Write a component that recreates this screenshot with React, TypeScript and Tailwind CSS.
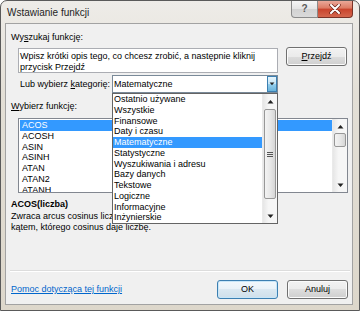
import React from 'react';

const categories = [
  'Ostatnio używane',
  'Wszystkie',
  'Finansowe',
  'Daty i czasu',
  'Matematyczne',
  'Statystyczne',
  'Wyszukiwania i adresu',
  'Bazy danych',
  'Tekstowe',
  'Logiczne',
  'Informacyjne',
  'Inżynierskie',
];

const functions = ['ACOS', 'ACOSH', 'ASIN', 'ASINH', 'ATAN', 'ATAN2', 'ATANH'];

// small black triangle used on scroll arrows / combo
const Arrow: React.FC<{ up?: boolean; size?: number }> = ({ up, size = 5 }) => (
  <svg width={size + 2} height={size} viewBox="0 0 7 5">
    {up ? <path d="M0.5 4.5 L3.5 1 L6.5 4.5 Z" fill="#222" /> : <path d="M0.5 0.5 L3.5 4 L6.5 0.5 Z" fill="#222" />}
  </svg>
);

const ScrollBar: React.FC<{ thumbTop: number; thumbHeight: number; grip?: boolean }> = ({ thumbTop, thumbHeight, grip }) => (
  <div className="w-[15px] h-full flex flex-col bg-[linear-gradient(to_right,#e6e6e6,#f6f6f6_40%,#f6f6f6)] border-l border-[#eaeaea]">
    <div className="h-[14px] flex items-center justify-center">
      <Arrow up />
    </div>
    <div className="flex-1 flex flex-col">
      <div style={{ height: thumbTop }} />
      <div
        className="mx-[1px] rounded-[2px] border border-[#979797] bg-[linear-gradient(to_right,#f3f3f3,#e8e8e8_50%,#d6d6d6)] flex items-center justify-center"
        style={{ height: thumbHeight }}
      >
        {grip && (
          <div className="flex flex-col gap-[1px]">
            <div className="w-[6px] h-[1px] bg-[#555]" />
            <div className="w-[6px] h-[1px] bg-[#555]" />
            <div className="w-[6px] h-[1px] bg-[#555]" />
          </div>
        )}
      </div>
    </div>
    <div className="h-[14px] flex items-center justify-center">
      <Arrow />
    </div>
  </div>
);

const PushButton: React.FC<{ children: React.ReactNode; primary?: boolean; className?: string }> = ({ children, primary, className }) => (
  <div
    className={
      'w-[61px] h-[19px] rounded-[3px] flex items-center justify-center leading-none ' +
      (primary
        ? 'border border-[#3c7fb1] shadow-[inset_0_0_0_1px_#c8e6f8] bg-[linear-gradient(to_bottom,#f2f8fc,#e9f2f8_50%,#dbe8f1_50%,#cfdfea)] '
        : 'border border-[#707070] shadow-[inset_0_0_0_1px_#fbfbfb] bg-[linear-gradient(to_bottom,#f2f2f2,#ebebeb_50%,#dddddd_50%,#cfcfcf)] ') +
      (className || '')
    }
  >
    {children}
  </div>
);

export default function App() {
  return (
    <div className="w-[360px] h-[311px] bg-white font-['Liberation_Sans','Noto_Sans',sans-serif] text-[9px] text-black">
      <div className="w-full h-full flex flex-col rounded-t-[7px] border border-[#5a5a5a] bg-[linear-gradient(to_bottom,#eeece8,#e3dfd6_30%,#ddd7cb)]">
        {/* Title bar */}
        <div className="h-[22px] flex items-start shrink-0">
          <div className="pl-[6px] pt-[5px] text-[10px] leading-[14px] text-[#1e1e1e]">Wstawianie funkcji</div>
          <div className="ml-auto mr-[6px] flex">
            <div className="w-[27px] h-[17px] rounded-bl-[4px] border border-t-0 border-[#8a8a8a] bg-[linear-gradient(to_bottom,#f6f6f6,#e4e4e4_50%,#d2d2d2_50%,#dadada)] flex items-center justify-center text-[10px] font-bold text-[#5a5a5a] leading-none">
              ?
            </div>
            <div className="w-[35px] h-[17px] rounded-br-[4px] border border-t-0 border-l-0 border-[#7a3328] bg-[linear-gradient(to_bottom,#eaa899,#dc7a63_45%,#c9432c_50%,#d4664d)] flex items-center justify-center">
              <svg width="12" height="10" viewBox="0 0 12 10">
                <path d="M2 1 L10 9 M10 1 L2 9" stroke="#6b2418" strokeWidth="3.4" strokeLinecap="round" />
                <path d="M2 1 L10 9 M10 1 L2 9" stroke="#ffffff" strokeWidth="2" strokeLinecap="round" />
              </svg>
            </div>
          </div>
        </div>

        {/* Client area */}
        <div className="ml-[4px] mr-[6px] mb-[5px] flex-1 border border-[#a2a2a2] bg-[#f0f0f0] flex flex-col">
          <div className="mt-[8px] ml-[5px] h-[11px] leading-[11px]">
            Wy<span className="underline">s</span>zukaj funkcję:
          </div>

          <div className="mt-[5px] flex items-start">
            <div className="ml-[12px] w-[260px] h-[25px] border border-[#abadb3] bg-white pl-[1px] pt-[2px] leading-[11px] whitespace-nowrap">
              Wpisz krótki opis tego, co chcesz zrobić, a następnie kliknij
              <br />
              przycisk Przejdź
            </div>
            <PushButton className="ml-[8px] -mt-[1px]">
              <span>
                <span className="underline">P</span>rzejdź
              </span>
            </PushButton>
          </div>

          <div className="mt-[2px] flex items-center">
            <div className="ml-[14px] w-[92px] leading-[11px]">
              Lub wybierz <span className="underline">k</span>ategorię:
            </div>
            <div className="relative w-[166px] h-[18px] border border-[#7a8a99] bg-white flex items-center">
              <div className="pl-[1px] flex-1 leading-[11px]">Matematyczne</div>
              <div className="w-[10px] h-full border border-[#3c7fb1] bg-[linear-gradient(to_bottom,#e5f4fc,#c4e5f6_50%,#98d1ef_50%,#68b3db)] flex items-center justify-center">
                <Arrow size={4} />
              </div>

              {/* open drop-down list */}
              <div className="absolute left-[-1px] top-[17px] w-[166px] h-[131px] border border-[#646464] bg-white flex z-10">
                <div className="flex-1 flex flex-col">
                  {categories.map((c) => (
                    <div
                      key={c}
                      className={
                        'h-[10.75px] leading-[10.75px] pl-[1px] whitespace-nowrap ' +
                        (c === 'Matematyczne' ? 'bg-[#3399ff] text-white' : '')
                      }
                    >
                      {c}
                    </div>
                  ))}
                </div>
                <ScrollBar thumbTop={1} thumbHeight={90} grip />
              </div>
            </div>
          </div>

          <div className="mt-[8px] ml-[5px] h-[11px] leading-[11px]">
            <span className="underline">W</span>ybierz funkcję:
          </div>

          <div className="mt-[6px] ml-[12px] w-[330px] h-[75px] border border-[#828790] bg-white flex overflow-hidden">
            <div className="flex-1 pt-[1px] flex flex-col">
              {functions.map((f, i) => (
                <div
                  key={f}
                  className={
                    'h-[10.75px] leading-[10.75px] ml-[1px] pl-[2px] shrink-0 ' + (i === 0 ? 'bg-[#3399ff] text-white' : '')
                  }
                >
                  {f}
                </div>
              ))}
            </div>
            <ScrollBar thumbTop={0} thumbHeight={14} />
          </div>

          <div className="mt-[6px] ml-[5px] h-[11px] leading-[11px] font-bold">ACOS(liczba)</div>
          <div className="mt-[1px] ml-[5px] leading-[11px] whitespace-nowrap">
            Zwraca arcus cosinus liczby. Arcus cosinus jest
            <br />
            kątem, którego cosinus daje liczbę.
          </div>

          <div className="flex-1" />
          <div className="ml-[4px] mr-[2px] h-[1px] bg-[#dcdcdc] border-b border-white box-content" />

          <div className="mt-[8px] mb-[5px] flex items-center">
            <div className="ml-[5px] text-[#0066cc] underline leading-[11px]">Pomoc dotycząca tej funkcji</div>
            <PushButton primary className="ml-auto">
              OK
            </PushButton>
            <PushButton className="ml-[9px] mr-[4px]">Anuluj</PushButton>
          </div>
        </div>
      </div>
    </div>
  );
}
